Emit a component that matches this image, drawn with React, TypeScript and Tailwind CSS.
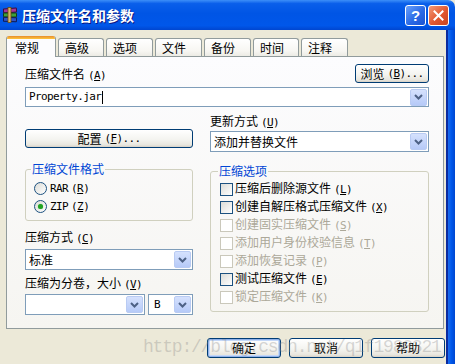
import React from "react";

const cjk = "font-['Noto_Sans_CJK_SC','Noto_Sans',sans-serif]";
const mono = "font-['DejaVu_Sans_Mono','Liberation_Mono',monospace]";

function Mn({ k }: { k: string }) {
  return (
    <span className={`${mono} text-[11px] tracking-[-0.6px] ml-[3px]`}>
      (<u className="underline-offset-[1px]">{k}</u>)
    </span>
  );
}

function Chevron() {
  return (
    <svg width="9" height="6" viewBox="0 0 9 6">
      <path d="M1 1 L4.5 4.5 L8 1" stroke="#4D6185" strokeWidth="2" fill="none" />
    </svg>
  );
}

function Combo({ className, children }: { className: string; children?: React.ReactNode }) {
  return (
    <div className={`${className} border border-[#7F9DB9] bg-white flex items-center`}>
      <div className="flex-1 pl-[2px] text-[12px] leading-[14px] text-black whitespace-nowrap flex items-center">
        {children}
      </div>
      <div className="w-[17px] h-[17px] mr-px rounded-[2px] border border-[#B9CBF3] bg-[linear-gradient(to_bottom,#d5e1fd,#b6caf8)] flex items-center justify-center">
        <Chevron />
      </div>
    </div>
  );
}

function Btn({ className, children, def }: { className: string; children: React.ReactNode; def?: boolean }) {
  return (
    <div
      className={`${className} border border-[#003C74] rounded-[3px] bg-[linear-gradient(to_bottom,#ffffff,#f4f4f0_55%,#e8e6de_88%,#d6d0c5)] flex items-center justify-center text-[12px] leading-[14px] text-black ${
        def ? "shadow-[inset_0_0_0_1px_#8fb1ea,inset_0_0_0_2px_#c4d8f8]" : ""
      }`}
    >
      {children}
    </div>
  );
}

function Check({ label, k, dis }: { label: string; k: string; dis?: boolean }) {
  return (
    <div className="h-[18px] flex items-center">
      <div
        className={
          dis
            ? "w-[13px] h-[13px] border border-[#CAC8BB] bg-white"
            : "w-[13px] h-[13px] border border-[#1C5180] bg-[linear-gradient(135deg,#dcdcd7,#ffffff)]"
        }
      />
      <span className={`ml-[2px] text-[12px] leading-[14px] ${dis ? "text-[#ACA899]" : "text-black"}`}>
        {label}
        <Mn k={k} />
      </span>
    </div>
  );
}

function Radio({ label, k, sel }: { label: string; k: string; sel?: boolean }) {
  return (
    <div className="h-[18px] flex items-center">
      <div className="w-[13px] h-[13px] rounded-full border border-[#1C5180] bg-[linear-gradient(135deg,#dcdcd7,#ffffff)] flex items-center justify-center">
        {sel && <div className="w-[5px] h-[5px] rounded-full bg-[#21A121] shadow-[0_0_1px_#5fd35f]" />}
      </div>
      <span className="ml-[3px] text-[12px] leading-[14px] text-black">
        <span className={`${mono} text-[11px] tracking-[-0.6px]`}>{label}</span>
        <Mn k={k} />
      </span>
    </div>
  );
}

function Tab({ label, className }: { label: string; className: string }) {
  return (
    <div
      className={`${className} h-[18px] border-t border-x border-[#919B9C] rounded-t-[3px] bg-[linear-gradient(to_bottom,#ffffff,#f7f6f2_70%,#ecebe5)] pl-[6px] flex items-center text-[12px] leading-[14px] text-black`}
    >
      {label}
    </div>
  );
}

function Legend({ children, className }: { children: React.ReactNode; className: string }) {
  return <legend className={`${className} px-[1px] text-[12px] leading-[14px] text-[#0046D5]`}>{children}</legend>;
}

export default function App() {
  return (
    <div className={`${cjk} w-[455px] h-[364px] bg-[#ECE9D8] flex flex-col overflow-hidden relative`}>
      {/* title bar */}
      <div className="h-[30px] rounded-tr-[7px] bg-[linear-gradient(to_bottom,#3d8ff8_0%,#0a5fea_12%,#0055e5_45%,#0057ea_85%,#0046d0_100%)] flex items-center pl-[2px]">
        <svg width="16" height="16" viewBox="0 0 16 16">
          <rect x="1.5" y="1.5" width="13" height="4" rx="0.5" fill="#a4339a" stroke="#3b0f3a" strokeWidth="1" transform="rotate(-4 8 3.5)" />
          <rect x="1.5" y="6" width="13" height="4" rx="0.5" fill="#3f9f3a" stroke="#123c10" strokeWidth="1" />
          <rect x="1.5" y="10.5" width="13" height="4" rx="0.5" fill="#3152c4" stroke="#0e1c54" strokeWidth="1" transform="rotate(3 8 12.5)" />
          <rect x="6" y="0.5" width="3" height="15" fill="#d9b66a" stroke="#6b4a10" strokeWidth="0.8" />
        </svg>
        <span className="ml-[4px] text-white font-bold text-[14px] leading-[16px] [text-shadow:1px_1px_#0a1883]">
          压缩文件名和参数
        </span>
        <div className="ml-auto mr-[6px] flex gap-[2px]">
          <div className="w-[21px] h-[21px] rounded-[3px] border border-white bg-[linear-gradient(135deg,#6aa0fb,#2a6ae6_55%,#1a52d2)] flex items-center justify-center text-white font-bold text-[15px] leading-none font-['Liberation_Sans',sans-serif]">
            ?
          </div>
          <div className="w-[21px] h-[21px] rounded-[3px] border border-white bg-[linear-gradient(135deg,#f29a78,#e2572f_55%,#c9431f)] flex items-center justify-center">
            <svg width="11" height="11" viewBox="0 0 11 11">
              <path d="M1.5 1.5 L9.5 9.5 M9.5 1.5 L1.5 9.5" stroke="white" strokeWidth="2" strokeLinecap="square" />
            </svg>
          </div>
        </div>
      </div>

      {/* body */}
      <div className="flex-1 flex">
        <div className="w-[446px] flex flex-col pl-[6px] pt-[6px]">
          {/* tabs */}
          <div className="h-[20px] flex items-end gap-[2px]">
            <div className="relative z-10 w-[50px] h-[21px] -mb-px border-x border-[#919B9C] rounded-t-[3px] overflow-hidden bg-[#FCFCFE] flex flex-col">
              <div className="h-[3px] bg-[linear-gradient(to_bottom,#e68b2c,#ffc73c)]" />
              <div className="flex-1 pl-[8px] flex items-center text-[12px] leading-[14px] text-black">常规</div>
            </div>
            <Tab label="高级" className="w-[46px]" />
            <Tab label="选项" className="w-[47px]" />
            <Tab label="文件" className="w-[47px]" />
            <Tab label="备份" className="w-[47px]" />
            <Tab label="时间" className="w-[46px]" />
            <Tab label="注释" className="w-[47px]" />
          </div>

          {/* panel */}
          <div className="w-[438px] h-[273px] border border-[#919B9C] bg-[linear-gradient(to_bottom,#fcfcfe,#f6f5f1)] pl-[18px] pt-[7px]">
            <div className="w-[404px] flex flex-col">
              <div className="h-[19px] flex items-end justify-between">
                <span className="text-[12px] leading-[14px] text-black">
                  压缩文件名
                  <Mn k="A" />
                </span>
                <Btn className="w-[74px] h-[19px]">
                  浏览
                  <Mn k="B" />
                  <span className={`${mono} text-[11px] tracking-[-0.6px]`}>...</span>
                </Btn>
              </div>
              <Combo className="mt-[4px] h-[20px] w-[404px]">
                <span className={`${mono} text-[11px] tracking-[-0.6px] ml-px`}>Property.jar</span>
                <span className="inline-block w-px h-[13px] bg-black ml-px" />
              </Combo>

              <div className="grid grid-cols-[168px_219px] gap-x-[17px]">
                {/* left column */}
                <div className="flex flex-col">
                  <Btn className="mt-[22px] w-[168px] h-[19px]">
                    配置
                    <Mn k="F" />
                    <span className={`${mono} text-[11px] tracking-[-0.6px]`}>...</span>
                  </Btn>
                  <fieldset className="mt-[14px] border border-[#D0D0BF] rounded-[3px] pl-[8px] pt-[3px] pb-[5px]">
                    <Legend className="-ml-[3px]">压缩文件格式</Legend>
                    <Radio label="RAR" k="R" />
                    <Radio label="ZIP" k="Z" sel />
                  </fieldset>
                  <span className="mt-[9px] text-[12px] leading-[14px] text-black">
                    压缩方式
                    <Mn k="C" />
                  </span>
                  <Combo className="mt-[3px] h-[21px] w-[168px]">
                    <span className="ml-px">标准</span>
                  </Combo>
                  <span className="mt-[6px] text-[12px] leading-[14px] text-black">
                    压缩为分卷，大小
                    <Mn k="V" />
                  </span>
                  <div className="mt-[2px] flex gap-[3px]">
                    <Combo className="h-[21px] w-[120px]" />
                    <Combo className="h-[21px] w-[45px]">
                      <span className={`${mono} text-[11px] ml-[3px]`}>B</span>
                    </Combo>
                  </div>
                </div>

                {/* right column */}
                <div className="flex flex-col">
                  <span className="mt-[7px] text-[12px] leading-[14px] text-black">
                    更新方式
                    <Mn k="U" />
                  </span>
                  <Combo className="mt-[1px] h-[21px] w-[219px]">
                    <span className="ml-px">添加并替换文件</span>
                  </Combo>
                  <fieldset className="mt-[12px] border border-[#D0D0BF] rounded-[3px] pl-[9px] pt-[2px] pb-[5px]">
                    <Legend className="-ml-[2px]">压缩选项</Legend>
                    <Check label="压缩后删除源文件" k="L" />
                    <Check label="创建自解压格式压缩文件" k="X" />
                    <Check label="创建固实压缩文件" k="S" dis />
                    <Check label="添加用户身份校验信息" k="T" dis />
                    <Check label="添加恢复记录" k="P" dis />
                    <Check label="测试压缩文件" k="E" />
                    <Check label="锁定压缩文件" k="K" dis />
                  </fieldset>
                </div>
              </div>
            </div>
          </div>

          {/* bottom buttons */}
          <div className="mt-[9px] pr-px flex justify-end gap-[8px]">
            <Btn className="w-[74px] h-[20px]" def>
              确定
            </Btn>
            <Btn className="w-[74px] h-[20px]">取消</Btn>
            <Btn className="w-[74px] h-[20px]">帮助</Btn>
          </div>
        </div>
        {/* right window frame */}
        <div className="flex-1 border-l-[2px] border-l-[#0b2b9e] bg-[linear-gradient(to_right,#1a6cf0,#0057ea_50%,#0046d0)]" />
      </div>

      {/* watermark */}
      <div className="absolute left-[143px] top-[338px] pointer-events-none whitespace-nowrap font-['Liberation_Mono',monospace] text-[18px] leading-[18px] tracking-[-1.2px] text-[rgba(140,140,140,0.35)]">
        http://blog.csdn.net/q1f1988321
      </div>
    </div>
  );
}
